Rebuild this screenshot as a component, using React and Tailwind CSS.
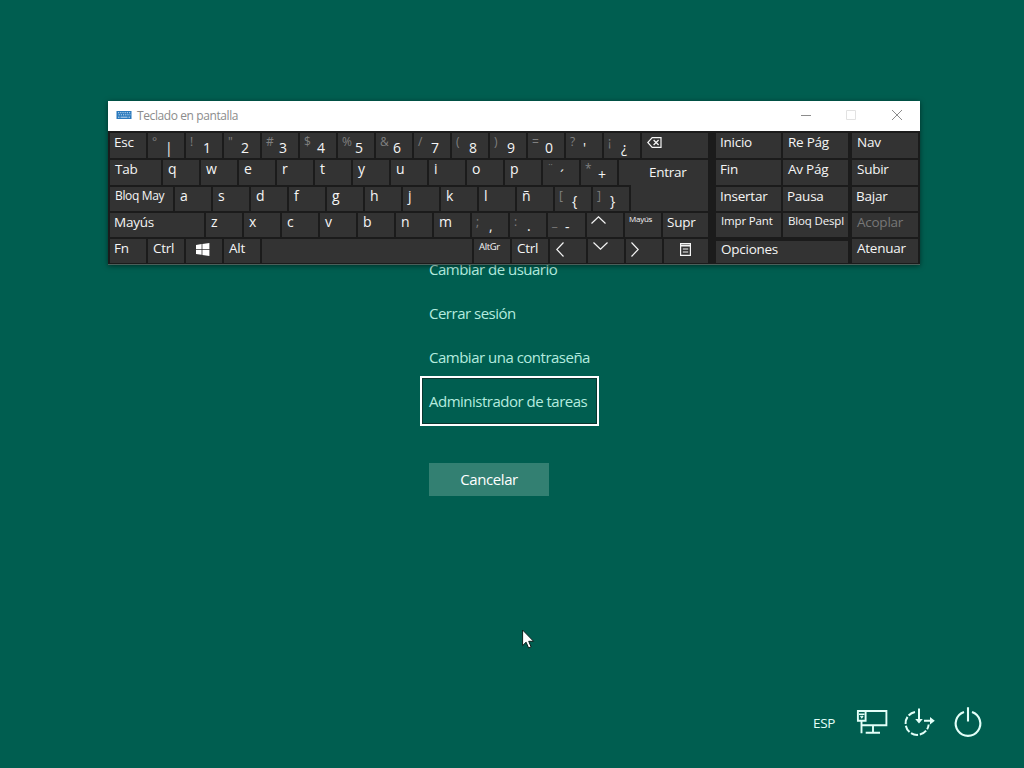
const rows = [
  [
    { label: "Esc", w: "w-[36px]" },
    { shift: "°", label: "|" },
    { shift: "!", label: "1" },
    { shift: "\"", label: "2" },
    { shift: "#", label: "3" },
    { shift: "$", label: "4" },
    { shift: "%", label: "5" },
    { shift: "&", label: "6" },
    { shift: "/", label: "7" },
    { shift: "(", label: "8" },
    { shift: ")", label: "9" },
    { shift: "=", label: "0" },
    { shift: "?", label: "'" },
    { shift: "¡", label: "¿", drop: "mt-[6px]" },
    { icon: "back", w: "w-[66px]" },
  ],
  [
    { label: "Tab", w: "w-[51px]", text: "pl-[5px] text-[13.5px]" },
    { label: "q" },
    { label: "w" },
    { label: "e" },
    { label: "r" },
    { label: "t" },
    { label: "y" },
    { label: "u" },
    { label: "i" },
    { label: "o" },
    { label: "p" },
    { shift: "¨", label: "´", drop: "mt-[7px]" },
    { shift: "*", label: "+", drop: "mt-[6px]" },
    { label: "Entrar", w: "w-[89px]", text: "pl-[30px] pt-[3px] text-[13.5px]" },
  ],
  [
    { label: "Bloq May", w: "w-[63px]", text: "pl-[5px] text-[12px] font-medium tracking-[-0.35px]" },
    { label: "a" },
    { label: "s" },
    { label: "d" },
    { label: "f" },
    { label: "g" },
    { label: "h" },
    { label: "j" },
    { label: "k" },
    { label: "l" },
    { label: "ñ" },
    { shift: "[", label: "{", drop: "mt-[5px]" },
    { shift: "]", label: "}", drop: "mt-[5px]" },
    { label: "", w: "w-[77px]", key: "-mt-[2px] h-[26px]" },
  ],
  [
    { label: "Mayús", w: "w-[94px]" },
    { label: "z" },
    { label: "x" },
    { label: "c" },
    { label: "v" },
    { label: "b" },
    { label: "n" },
    { label: "m" },
    { shift: ";", label: ",", drop: "mt-[4px]" },
    { shift: ":", label: ".", drop: "mt-[4px]" },
    { shift: "_", label: "-", w: "w-[37px]", drop: "mt-[5px]" },
    { icon: "up" },
    { label: "Mayús", text: "pl-[4px] -mt-[3px] text-[8px]" },
    { label: "Supr", w: "w-[45px]" },
  ],
  [
    { label: "Fn" },
    { label: "Ctrl", text: "pl-[5px] text-[13.5px]" },
    { icon: "windows" },
    { label: "Alt", text: "pl-[5px] text-[13.5px]" },
    { label: "", w: "w-[210px]" },
    { label: "AltGr", text: "pl-[5px] -mt-px text-[9.5px] font-medium tracking-[-0.35px]" },
    { label: "Ctrl", text: "pl-[5px] text-[13.5px]" },
    { icon: "left" },
    { icon: "down" },
    { icon: "right" },
    { icon: "menu", w: "w-[44px]" },
  ],
];

const small = "pl-[5px] -mt-px text-[11.5px] font-medium tracking-[-0.15px]";

const sideRows = [
  [{ label: "Inicio" }, { label: "Re Pág", text: "pl-[5px] text-[13.5px]" }, { label: "Nav", text: "pl-[5px] text-[13.5px]" }],
  [{ label: "Fin" }, { label: "Av Pág", text: "pl-[5px] text-[13.5px]" }, { label: "Subir", text: "pl-[5px] text-[13.5px]" }],
  [{ label: "Insertar" }, { label: "Pausa" }, { label: "Bajar" }],
  [
    { label: "Impr Pant", text: small },
    { label: "Bloq Despl", text: small },
    { label: "Acoplar", text: "pl-[5px] text-[13.5px] text-[#777]" },
  ],
  [{ label: "Opciones", wide: true, text: "pl-[5px] -mt-px text-[13.5px]" }, { label: "Atenuar", text: "pl-[5px] text-[13.5px]" }],
];

const heights = ["h-[25px]", "h-[25px]", "h-[24px]", "h-[24px]", "h-[24px]"];

function KeyIcon({ name }) {
  const line = { fill: "none", stroke: "currentColor", strokeWidth: 1.2 };
  if (name === "back") {
    return (
      <svg className="ml-[5px] mt-[4px]" width="15" height="11" viewBox="0 0 15 11" {...line}>
        <path d="M5.2 .7H14v9.6H5.2L.8 5.5z" />
        <path d="M6.6 3l5 5M11.6 3l-5 5" strokeWidth="1.3" />
      </svg>
    );
  }
  if (name === "windows") {
    return (
      <svg className="ml-[10px] mt-[4px]" width="14" height="13" viewBox="0 0 14 13" fill="white">
        <path d="M0 1.9L5.6 1.1V6H0zM6.4 1L13.4 0V6H6.4zM0 6.8H5.6V11.8L0 11zM6.4 6.8H13.4V13L6.4 12z" />
      </svg>
    );
  }
  if (name === "menu") {
    return (
      <svg className="ml-[16px] mt-[4px]" width="11" height="13" viewBox="0 0 11 13" {...line}>
        <path d="M.6 .6H10.4V12.4H.6z" />
        <path d="M.6 2.6H10.4" strokeWidth="1.8" />
        <path d="M2.8 6H8.2M2.8 9H8.2" />
      </svg>
    );
  }
  if (name === "up") {
    return (
      <svg className="ml-[4px] mt-[3px]" width="15" height="8" viewBox="0 0 15 8" {...line}>
        <path d="M.5 7.5L7.5 .8L14.5 7.5" />
      </svg>
    );
  }
  if (name === "down") {
    return (
      <svg className="ml-[5px] mt-[3px]" width="15" height="8" viewBox="0 0 15 8" {...line}>
        <path d="M.5 .5L7.5 7.2L14.5 .5" />
      </svg>
    );
  }
  return (
    <svg className={name === "left" ? "ml-[6px] mt-[3px]" : "ml-[5px] mt-[3px]"} width="8" height="15" viewBox="0 0 8 15" {...line}>
      <path d={name === "left" ? "M7.5 .5L.8 7.5L7.5 14.5" : "M.5 .5L7.2 7.5L.5 14.5"} />
    </svg>
  );
}

function Key({ item }) {
  return (
    <div className={`flex shrink-0 items-start overflow-hidden whitespace-nowrap bg-[#333] leading-[18px] tracking-[-0.25px] text-[#f5f5f5] ${item.w || "w-[36px]"} ${item.key || "h-full"}`}>
      {item.icon && <KeyIcon name={item.icon} />}
      {item.shift && <span className="w-[17px] shrink-0 pl-[4px] text-[12px] leading-[17px] text-[#808080]">{item.shift}</span>}
      {item.label && (
        <span className={item.shift ? `text-[14px] ${item.drop || "mt-[6px]"}` : item.text || (item.label.length === 1 ? "pl-[5px] text-[14px]" : "pl-[4px] text-[13.5px]")}>
          {item.label}
        </span>
      )}
    </div>
  );
}

function TitleBar() {
  return (
    <div className="flex h-[30px] items-center bg-white text-[#8c8c8c]">
      <svg className="-mt-[2px] ml-[8px]" width="16" height="8" viewBox="0 0 16 8">
        <rect x=".5" width="15" height="8" fill="#2878bd" />
        <path d="M2 1.7H14.5M2.6 3.8H14.5" stroke="#d5e8f6" strokeWidth=".9" strokeDasharray="1.2 1" />
        <path d="M2 6.2H3.5M4.5 6.2H11.5M12.5 6.2H14" stroke="#d5e8f6" strokeWidth=".9" />
      </svg>
      <span className="ml-[5px] text-[12px] tracking-[-0.4px]">Teclado en pantalla</span>
      <svg className="-mt-[2px] ml-auto mr-[17px]" width="102" height="12" viewBox="0 0 102 12" fill="none" stroke="currentColor">
        <path d="M0 6.5H10" />
        <path d="M45.5 1.5H54.5V10.5H45.5z" stroke="#e2e2e2" />
        <path d="M91 1L101 11M101 1L91 11" />
      </svg>
    </div>
  );
}

function Keyboard() {
  return (
    <div className="absolute left-[108px] top-[101px] h-[164px] w-[812px] bg-[#1b1b1b] shadow-[0_1px_5px_rgba(0,0,0,0.5)]">
      <TitleBar />
      <div className="flex h-[134px] border-b border-[#4b5f5a] pl-[2px] pt-[2px]">
        <div className="flex w-[598px] flex-col gap-[2px]">
          {rows.map((row, i) => (
            <div key={i} className={`flex gap-[2px] ${heights[i]}`}>
              {row.map((item, j) => (
                <Key key={j} item={item} />
              ))}
            </div>
          ))}
        </div>
        <div className="ml-[8px] flex flex-col gap-[2px]">
          {sideRows.map((row, i) => (
            <div key={i} className={`flex ${heights[i]}`}>
              {row.map((item, j) => {
                const last = j === row.length - 1;
                const width = item.wide ? "w-[132px]" : last ? "ml-[4px] w-[66px]" : j === 1 ? "ml-[2px] w-[65px]" : "w-[65px]";
                return <Key key={j} item={{ ...item, w: width, key: item.wide ? "h-[22px] mt-[2px]" : "h-full" }} />;
              })}
            </div>
          ))}
        </div>
      </div>
    </div>
  );
}

function StatusIcons() {
  return (
    <div className="flex h-[32px] items-center text-[#e2fff8]">
      <span className="w-[43px] text-[13.5px] tracking-[-0.3px]">ESP</span>
      <svg width="32" height="32" viewBox="856 707 32 32" fill="none" stroke="currentColor" strokeWidth="1.9">
        <path d="M866 711H886.4V725.2H862M873 726V732.6M865.7 732.8H880" />
        <path d="M857.9 711H865.6V720.8H857.9zM861.5 721V733.3" />
        <path d="M859 714.3H864.5M860.6 715.8L861.8 717.6L863 715.8" strokeWidth="1.4" />
      </svg>
      <svg className="ml-[16px]" width="32" height="32" viewBox="904 707 32 32" fill="none" stroke="currentColor" strokeWidth="2">
        <path d="M915 711.9A11.6 11.6 0 1 0 928.7 724.5" strokeDasharray="7.4 1.8" />
        <path d="M919 708.5V720M924 720.7H932" />
        <path d="M915.2 719L919 723.4L922.8 719zM930 717L934.8 720.7L930 724.4z" fill="currentColor" stroke="none" />
      </svg>
      <svg className="ml-[16px]" width="32" height="32" viewBox="952 707 32 32" fill="none" stroke="currentColor" strokeWidth="2.1">
        <path d="M964 711.9A12.3 12.3 0 1 0 972 711.9M968 707.3V721.5" />
      </svg>
    </div>
  );
}

function Cursor() {
  return (
    <svg className="absolute left-[522px] top-[629px]" width="13" height="20" viewBox="0 0 13 20">
      <path d="M.6 1V16.6L4.1 13.2L6.6 19L9.1 17.9L6.7 12.3H11.6z" fill="white" stroke="#0b1f1b" strokeWidth="1" />
    </svg>
  );
}

export default function App() {
  return (
    <div className="relative flex h-[768px] w-[1024px] flex-col overflow-hidden bg-[#005e50] font-['Open_Sans','Noto_Sans',sans-serif]">
      <div className="ml-[423px] mt-[247px] flex flex-col items-start text-[15px] tracking-[-0.5px] text-[#b4ebdf]">
        {["Cambiar de usuario", "Cerrar sesión", "Cambiar una contraseña"].map((text) => (
          <button key={text} className="h-[44px] pl-[6px]">{text}</button>
        ))}
        <button className="h-[44px] w-[173px] whitespace-nowrap pl-[6px] text-left outline-2 outline-offset-1 outline-white ring-1 ring-[#0a352e]">
          Administrador de tareas
        </button>
        <button className="ml-[6px] mt-[40px] h-[33px] w-[120px] bg-[#338072] text-white tracking-[-0.4px]">Cancelar</button>
      </div>
      <div className="mb-[29px] ml-[813px] mt-auto">
        <StatusIcons />
      </div>
      <Keyboard />
      <Cursor />
    </div>
  );
}
